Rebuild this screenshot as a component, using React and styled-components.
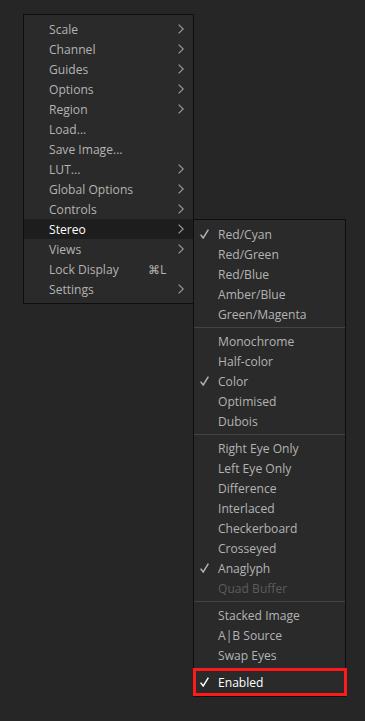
import React from "react";
import styled, { createGlobalStyle } from "styled-components";

const Global = createGlobalStyle`
  html, body { margin: 0; padding: 0; background: #262626; }
  body { font-family: "Open Sans", "Noto Sans", sans-serif; }
`;

const Page = styled.div`
  width: 365px;
  height: 721px;
  padding: 14px 0 0 23px;
  box-sizing: border-box;
  background: #262626;
`;

const Menu = styled.div`
  position: relative;
  width: ${(p) => p.$width}px;
  box-sizing: border-box;
  background: #2a2a2a;
  border: 1px solid #0e0e0e;
  padding: 4px 0;
  display: flex;
  flex-direction: column;
`;

const Row = styled.div`
  position: relative;
  height: 20px;
  display: flex;
  align-items: center;
  padding: 0 9px 0 ${(p) => p.$indent}px;
  font-size: 12.1px;
  color: ${(p) => (p.$active ? "#ffffff" : p.$disabled ? "#5c5c5c" : "#b3b3b3")};
  background: ${(p) => (p.$highlight ? "#1d1d1d" : "transparent")};
  white-space: nowrap;
`;

const Label = styled.span`
  flex: 1;
`;

const Shortcut = styled.span`
  width: 28px;
  margin-right: 8px;
  color: #b3b3b3;
`;

const CheckSlot = styled.span`
  width: 24px;
  display: flex;
  align-items: center;
  padding-left: 6px;
  box-sizing: border-box;
`;

const Separator = styled.div`
  height: 7px;
  display: flex;
  align-items: center;
  &::after {
    content: "";
    flex: 1;
    height: 1px;
    background: #444444;
  }
`;

const Submenu = styled(Menu)`
  position: absolute;
  left: 169px;
  top: 0;
`;

const RedBox = styled.div`
  position: absolute;
  left: -1px;
  right: -2px;
  top: -4px;
  bottom: -4px;
  border: 3px solid #ff1a1a;
  pointer-events: none;
`;

const Chevron = () => (
  <svg width="6" height="10" viewBox="0 0 6 10">
    <polyline points="0.6,0.6 5.2,5 0.6,9.4" fill="none" stroke="#9a9a9a" strokeWidth="1.2" />
  </svg>
);

const Check = ({ color }) => (
  <svg width="9" height="10" viewBox="0 0 9 10">
    <polyline points="0.6,5.6 3.2,9 8.4,0.6" fill="none" stroke={color} strokeWidth="1.5" />
  </svg>
);

const mainItems = [
  ["Scale", true],
  ["Channel", true],
  ["Guides", true],
  ["Options", true],
  ["Region", true],
  ["Load...", false],
  ["Save Image...", false],
  ["LUT...", true],
  ["Global Options", true],
  ["Controls", true],
  ["Stereo", true, "stereo"],
  ["Views", true],
  ["Lock Display", false, "shortcut"],
  ["Settings", true],
];

const subGroups = [
  [["Red/Cyan", true], ["Red/Green"], ["Red/Blue"], ["Amber/Blue"], ["Green/Magenta"]],
  [["Monochrome"], ["Half-color"], ["Color", true], ["Optimised"], ["Dubois"]],
  [
    ["Right Eye Only"],
    ["Left Eye Only"],
    ["Difference"],
    ["Interlaced"],
    ["Checkerboard"],
    ["Crosseyed"],
    ["Anaglyph", true],
    ["Quad Buffer", false, true],
  ],
  [["Stacked Image"], ["A|B Source"], ["Swap Eyes"]],
];

function StereoMenu() {
  return (
    <Submenu $width={153}>
      {subGroups.map((g, gi) => (
        <React.Fragment key={gi}>
          {gi > 0 && <Separator />}
          {g.map(([label, checked, disabled]) => (
            <Row key={label} $indent={0} $disabled={disabled}>
              <CheckSlot>{checked && <Check color="#b3b3b3" />}</CheckSlot>
              <Label>{label}</Label>
            </Row>
          ))}
        </React.Fragment>
      ))}
      <Separator />
      <Row $indent={0} $active>
        <CheckSlot>
          <Check color="#ffffff" />
        </CheckSlot>
        <Label>Enabled</Label>
        <RedBox />
      </Row>
    </Submenu>
  );
}

export default function App() {
  return (
    <Page>
      <Global />
      <Menu $width={171}>
        {mainItems.map(([label, sub, kind]) => (
          <Row key={label} $indent={25} $highlight={kind === "stereo"} $active={kind === "stereo"}>
            <Label>{label}</Label>
            {kind === "shortcut" && <Shortcut>⌘L</Shortcut>}
            {sub && <Chevron />}
            {kind === "stereo" && <StereoMenu />}
          </Row>
        ))}
      </Menu>
    </Page>
  );
}
